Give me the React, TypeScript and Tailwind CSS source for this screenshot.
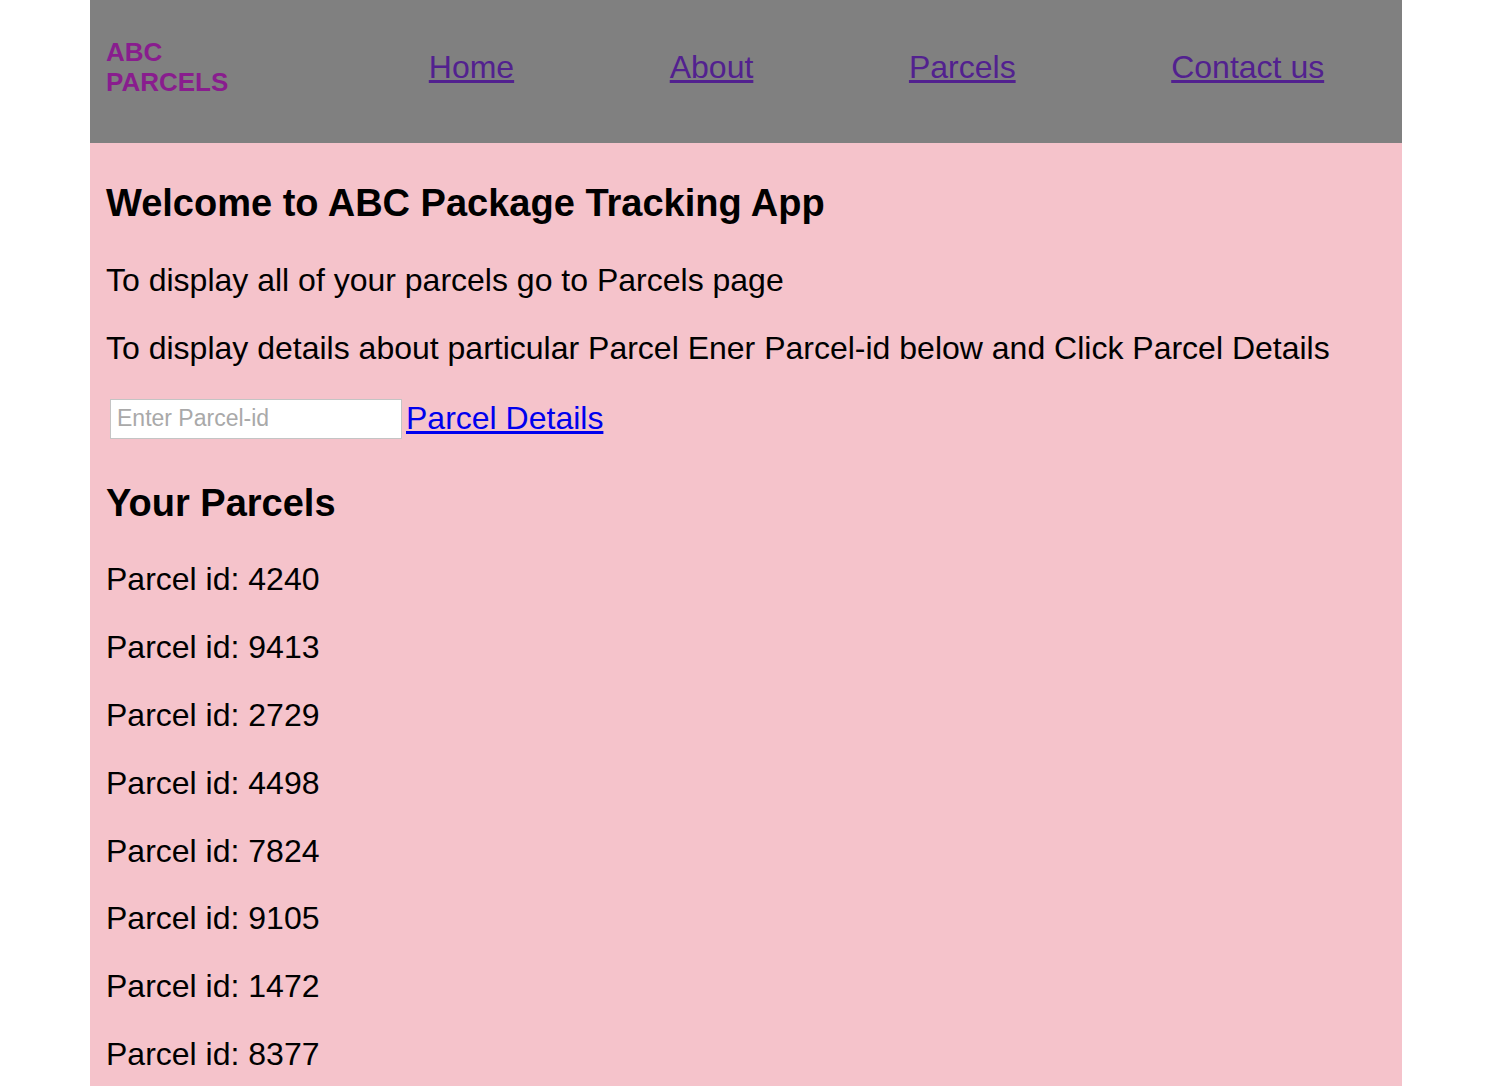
import React, { useState } from 'react';

const parcelIds = [4240, 9413, 2729, 4498, 7824, 9105, 1472, 8377];

const navLinks = ['Home', 'About', 'Parcels', 'Contact us'];

const Header: React.FC = () => (
    <header className="h-[143px] pb-[9px] bg-[#808080] flex items-center">
        <div className="w-[261px] pl-[16px] text-[26px] leading-[30px] font-bold text-[#891d8e]">
            <div>ABC</div>
            <div>PARCELS</div>
        </div>
        <ul className="flex-1 flex justify-around items-center">
            {navLinks.map(link => (
                <li key={link}>
                    <a href="#" className="text-[32px] leading-[1.15] underline text-[#52218f]">
                        {link}
                    </a>
                </li>
            ))}
        </ul>
    </header>
);

export default function App() {
    const [parcelId, setParcelId] = useState('');

    return (
        <div className="min-h-screen bg-white" style={{ fontFamily: '"Liberation Sans", Arial, sans-serif' }}>
            <div className="ml-[90px] w-[1312px] min-h-screen flex flex-col">
                <Header />
                <main className="flex-1 bg-[#f5c3cb] px-[16px] pt-[39px] pb-[8px] text-black">
                    <h3 className="text-[38px] leading-[1.13] font-bold mb-[37px]">
                        Welcome to ABC Package Tracking App
                    </h3>
                    <p className="text-[32px] leading-[1.15] mb-[31px]">
                        To display all of your parcels go to Parcels page
                    </p>
                    <p className="text-[32px] leading-[1.15] mb-[32px]">
                        To display details about particular Parcel Ener Parcel-id below and Click Parcel Details
                    </p>
                    <div className="flex items-center gap-[4px] mb-[43px]">
                        <input
                            type="text"
                            value={parcelId}
                            onChange={e => setParcelId(e.target.value)}
                            placeholder="Enter Parcel-id"
                            className="ml-[4px] w-[292px] h-[40px] bg-white border border-[#c4c4c4] px-[6px] text-[23px] text-black placeholder:text-[#a9a9a9] outline-none"
                        />
                        <a href="#" className="text-[32px] leading-[1.15] underline text-[#0000ee]">
                            Parcel Details
                        </a>
                    </div>
                    <h3 className="text-[38px] leading-[1.13] font-bold mb-[37px]">Your Parcels</h3>
                    <div>
                        {parcelIds.map(id => (
                            <p key={id} className="text-[32px] leading-[1.15] mb-[31px]">
                                Parcel id: {id}
                            </p>
                        ))}
                    </div>
                </main>
            </div>
        </div>
    );
}
